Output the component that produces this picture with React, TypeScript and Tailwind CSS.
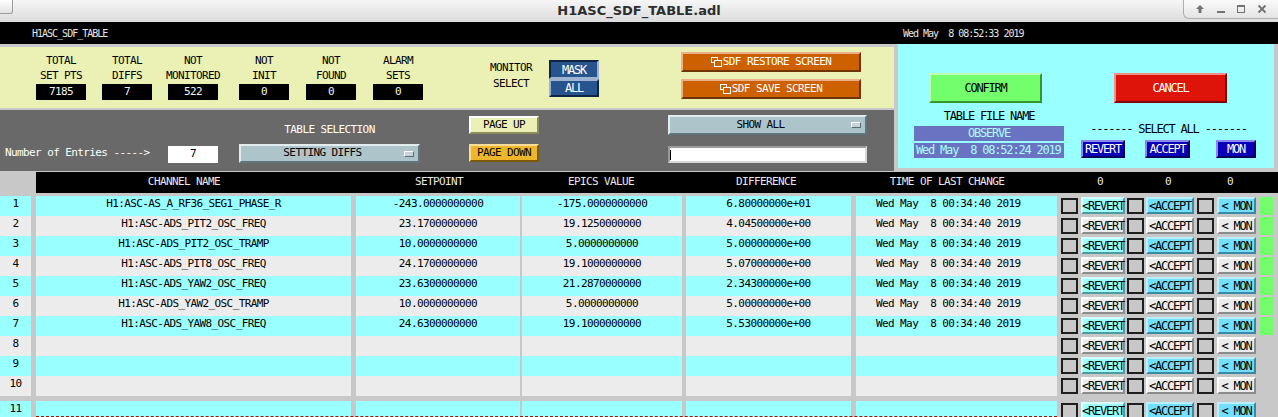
import React from 'react';

type Row = { name: string; set: string; epics: string; diff: string };

const rows: Row[] = [
  { name: 'H1:ASC-AS_A_RF36_SEG1_PHASE_R', set: '-243.0000000000', epics: '-175.0000000000', diff: '6.80000000e+01' },
  { name: 'H1:ASC-ADS_PIT2_OSC_FREQ', set: '23.1700000000', epics: '19.1250000000', diff: '4.04500000e+00' },
  { name: 'H1:ASC-ADS_PIT2_OSC_TRAMP', set: '10.0000000000', epics: '5.0000000000', diff: '5.00000000e+00' },
  { name: 'H1:ASC-ADS_PIT8_OSC_FREQ', set: '24.1700000000', epics: '19.1000000000', diff: '5.07000000e+00' },
  { name: 'H1:ASC-ADS_YAW2_OSC_FREQ', set: '23.6300000000', epics: '21.2870000000', diff: '2.34300000e+00' },
  { name: 'H1:ASC-ADS_YAW2_OSC_TRAMP', set: '10.0000000000', epics: '5.0000000000', diff: '5.00000000e+00' },
  { name: 'H1:ASC-ADS_YAW8_OSC_FREQ', set: '24.6300000000', epics: '19.1000000000', diff: '5.53000000e+00' },
];

const counters = [
  { top: 'TOTAL', bottom: 'SET PTS', value: '7185', ml: 'ml-[36px]' },
  { top: 'TOTAL', bottom: 'DIFFS', value: '7', ml: 'ml-[16px]' },
  { top: 'NOT', bottom: 'MONITORED', value: '522', ml: 'ml-[16px]' },
  { top: 'NOT', bottom: 'INIT', value: '0', ml: 'ml-[21px]' },
  { top: 'NOT', bottom: 'FOUND', value: '0', ml: 'ml-[17px]' },
  { top: 'ALARM', bottom: 'SETS', value: '0', ml: 'ml-[17px]' },
];

// motif-ish bevels
const bevelGray = 'border-2 border-t-white border-l-white border-b-[#8c8c8c] border-r-[#8c8c8c] bg-[#ececec]';
const bevelCyan = 'border-2 border-t-[#d6ffff] border-l-[#d6ffff] border-b-[#4f9a9a] border-r-[#4f9a9a] bg-[#99ffff]';
const bevelBlue = 'border-2 border-t-[#b9efff] border-l-[#b9efff] border-b-[#3a89a3] border-r-[#3a89a3] bg-[#73dfff]';
const bevelNavy = 'border-2 border-t-[#8c86f0] border-l-[#8c86f0] border-b-[#05005c] border-r-[#05005c] bg-[#0a00b8]';
const bevelOrange = 'border-2 border-t-[#eab088] border-l-[#eab088] border-b-[#6e3300] border-r-[#6e3300] bg-[#cd6100]';
const bevelMenu = 'border-2 border-t-[#e2ecef] border-l-[#e2ecef] border-b-[#5f767d] border-r-[#5f767d] bg-[#aec4cb]';

const small = 'text-[12px] tracking-[-1.2px]';

function TitleBar() {
  return (
    <div className="flex h-[22px] bg-gradient-to-b from-[#f6f6f6] to-[#dcdcdc]">
      <div className="flex-1">
        <div className="h-[14px] w-[13px] rounded-br-[3px] border-r border-b border-[#9c9c9c] bg-gradient-to-b from-white to-[#e2e2e2]" />
      </div>
      <span className="self-center font-['DejaVu_Sans',sans-serif] text-[13px] font-bold tracking-normal text-[#2e2e2e]">
        H1ASC_SDF_TABLE.adl
      </span>
      <div className="flex flex-1 justify-end">
        <div className="flex h-[19px] w-[95px] items-center justify-around rounded-bl-[6px] border-l border-b border-[#adadad] bg-gradient-to-b from-[#fafafa] to-[#e4e4e4] px-[6px]">
          <svg width="10" height="10" viewBox="0 0 10 10">
            <path d="M5 1 L9 5 H6.5 V9 H3.5 V5 H1 Z" fill="#727272" />
          </svg>
          <svg width="10" height="10" viewBox="0 0 10 10">
            <rect x="1" y="7" width="8" height="2" fill="#727272" />
          </svg>
          <svg width="10" height="10" viewBox="0 0 10 10">
            <rect x="1.5" y="1.5" width="7" height="7" fill="none" stroke="#727272" />
            <rect x="1" y="1" width="8" height="2" fill="#727272" />
          </svg>
          <svg width="10" height="10" viewBox="0 0 10 10">
            <path d="M1.5 1.5 L8.5 8.5 M8.5 1.5 L1.5 8.5" stroke="#727272" strokeWidth="1.8" />
          </svg>
        </div>
      </div>
    </div>
  );
}

function RelatedIcon() {
  return (
    <svg width="11" height="10" viewBox="0 0 11 10" className="mr-[1px]">
      <rect x="0.5" y="0.5" width="6" height="5" fill="none" stroke="#ffffff" />
      <rect x="3.5" y="3.5" width="7" height="6" fill="#cd6100" stroke="#ffffff" />
    </svg>
  );
}

function Menu({ label, w }: { label: string; w: string }) {
  return (
    <div className={`flex items-center text-black ${bevelMenu} ${w}`}>
      <span className="flex-1 text-center">{label}</span>
      <span className="mr-[4px] h-[6px] w-[10px] border border-t-white border-l-white border-b-[#5a6c72] border-r-[#5a6c72] bg-[#c4d4d9]" />
    </div>
  );
}

function StatusPanel() {
  return (
    <div className="mt-[3px] flex h-[61px] items-start bg-[#ebf1b5] text-black">
      {counters.map((c) => (
        <div key={c.bottom} className={`flex w-[50px] flex-col items-center pt-[6px] ${c.ml}`}>
          <span className="whitespace-nowrap leading-[15px]">{c.top}</span>
          <span className="whitespace-nowrap leading-[15px]">{c.bottom}</span>
          <div className="mt-[1px] h-[16px] w-[50px] bg-black text-center leading-[16px] text-[#f2f2f2]">{c.value}</div>
        </div>
      ))}

      <div className="ml-[67px] flex w-[42px] flex-col items-center pt-[13px]">
        <span className="leading-[16px]">MONITOR</span>
        <span className="leading-[16px]">SELECT</span>
      </div>

      <div className={`ml-[17px] mt-[13px] flex w-[50px] flex-col text-white ${small}`}>
        <div className="flex h-[19px] items-center justify-center border-2 border-t-[#0f2444] border-l-[#0f2444] border-b-[#9cb4d2] border-r-[#9cb4d2] bg-[#27548d]">
          MASK
        </div>
        <div className="flex h-[18px] items-center justify-center border-2 border-t-[#9cb4d2] border-l-[#9cb4d2] border-b-[#0f2444] border-r-[#0f2444] bg-[#27548d]">
          ALL
        </div>
      </div>

      <div className="ml-[82px] mt-[5px] flex w-[180px] flex-col text-white">
        <div className={`flex h-[20px] items-center justify-center ${bevelOrange}`}>
          <RelatedIcon />
          SDF RESTORE SCREEN
        </div>
        <div className={`mt-[7px] flex h-[20px] items-center justify-center ${bevelOrange}`}>
          <RelatedIcon />
          SDF SAVE SCREEN
        </div>
      </div>
    </div>
  );
}

function SelectionPanel() {
  return (
    <div className="mt-[2px] flex h-[61px] items-start bg-[#696969] text-white">
      <span className="ml-[5px] mt-[36px] w-[163px] whitespace-pre leading-[14px]">Number of Entries -----&gt;</span>
      <div className="mt-[36px] h-[17px] w-[50px] bg-white text-center leading-[15px] text-black">7</div>

      <div className="ml-[21px] flex w-[181px] flex-col">
        <span className="mt-[13px] text-center leading-[14px]">TABLE SELECTION</span>
        <div className="mt-[7px]">
          <Menu label="SETTING DIFFS" w="h-[19px] w-[181px]" />
        </div>
      </div>

      <div className="ml-[49px] flex w-[70px] flex-col text-black">
        <div className="mt-[6px] flex h-[18px] items-center justify-center border-2 border-t-white border-l-white border-b-[#8a8c5c] border-r-[#8a8c5c] bg-[#ebf1b5]">
          PAGE UP
        </div>
        <div className="mt-[10px] flex h-[18px] items-center justify-center border-2 border-t-[#f8dc98] border-l-[#f8dc98] border-b-[#7c5a0e] border-r-[#7c5a0e] bg-[#eeb62b]">
          PAGE DOWN
        </div>
      </div>

      <div className="ml-[129px] flex w-[199px] flex-col">
        <div className="mt-[5px]">
          <Menu label="SHOW ALL" w="h-[20px] w-[199px]" />
        </div>
        <div className="mt-[11px] flex h-[17px] items-center border-2 border-t-[#9a9a9a] border-l-[#9a9a9a] border-b-[#d8d8d8] border-r-[#d8d8d8] bg-white">
          <span className="h-[10px] w-[1px] bg-black" />
        </div>
      </div>
    </div>
  );
}

function ConfirmPanel() {
  return (
    <div className={`ml-[4px] h-[124px] w-[376px] bg-[#99ffff] text-black ${small}`}>
      <div className="flex pt-[29px]">
        <div className="ml-[31px] flex h-[30px] w-[113px] items-center justify-center border-2 border-t-[#bfffb8] border-l-[#bfffb8] border-b-[#38962c] border-r-[#38962c] bg-[#73ff6b]">
          CONFIRM
        </div>
        <div className="ml-[72px] flex h-[30px] w-[113px] items-center justify-center border-2 border-t-[#f29088] border-l-[#f29088] border-b-[#7a0602] border-r-[#7a0602] bg-[#de1309] text-white">
          CANCEL
        </div>
      </div>
      <div className="flex">
        <div className="ml-[16px] flex w-[150px] flex-col">
          <span className="mt-[6px] text-center leading-[14px]">TABLE FILE NAME</span>
          <div className="mt-[3px] h-[15px] bg-[#6a73c1] text-center leading-[15px] text-[#a8ffff]">OBSERVE</div>
          <div className="mt-[2px] h-[15px] whitespace-pre bg-[#6a73c1] pl-[2px] leading-[15px] text-[#a8ffff]">
            Wed May  8 08:52:24 2019
          </div>
        </div>
        <div className="ml-[17px] flex w-[175px] flex-col">
          <span className="mt-[19px] whitespace-pre text-center leading-[14px]">------- SELECT ALL -------</span>
          <div className="mt-[4px] flex text-white">
            <div className={`flex h-[18px] w-[44px] items-center justify-center ${bevelNavy}`}>REVERT</div>
            <div className={`ml-[20px] flex h-[18px] w-[45px] items-center justify-center ${bevelNavy}`}>ACCEPT</div>
            <div className={`ml-[26px] flex h-[18px] w-[40px] items-center justify-center ${bevelNavy}`}>MON</div>
          </div>
        </div>
      </div>
    </div>
  );
}

function TableHeader() {
  return (
    <div className="ml-[36px] mt-[1px] flex h-[21px] items-center bg-black text-[#e8e8e8]">
      <span className="w-[296px] text-center">CHANNEL NAME</span>
      <span className="w-[214px] text-center">SETPOINT</span>
      <span className="w-[110px] text-center">EPICS VALUE</span>
      <span className="w-[220px] text-center">DIFFERENCE</span>
      <span className="w-[142px] text-center">TIME OF LAST CHANGE</span>
      <span className="ml-[62px] w-[40px] text-center">0</span>
      <span className="ml-[28px] w-[40px] text-center">0</span>
      <span className="ml-[22px] w-[40px] text-center">0</span>
    </div>
  );
}

function Box() {
  return <div className="mt-[2px] h-[16px] w-[17px] border-2 border-[#1e1e1e] bg-[#c8c8c8]" />;
}

function DataRow({ n, row, className = '' }: { n: number; row?: Row; className?: string }) {
  const odd = n % 2 === 1;
  const cell = odd ? 'bg-[#99ffff]' : 'bg-[#ececec]';
  const revert = odd ? bevelCyan : bevelGray;
  const other = odd ? bevelBlue : bevelGray;
  return (
    <div className={`relative flex h-[20px] text-black ${className}`}>
      <div className={`w-[31px] text-center leading-[15px] ${cell}`}>{n}</div>
      <div className={`ml-[5px] w-[315px] text-center leading-[15px] ${cell}`}>{row?.name}</div>
      <div className={`ml-[5px] w-[164px] text-center leading-[15px] ${cell}`}>{row?.set}</div>
      <div className={`ml-[2px] w-[160px] text-center leading-[15px] ${cell}`}>{row?.epics}</div>
      <div className={`ml-[4px] w-[165px] text-center leading-[15px] ${cell}`}>{row?.diff}</div>
      <div className={`ml-[5px] w-[201px] whitespace-pre pl-[20px] leading-[15px] ${cell}`}>
        {row ? 'Wed May  8 00:34:40 2019' : ''}
      </div>

      <div className={`ml-[4px] flex ${small}`}>
        <Box />
        <div className={`ml-[3px] mt-[1px] flex h-[17px] w-[44px] items-center justify-center whitespace-nowrap ${revert}`}>&lt;REVERT</div>
        <div className="ml-[2px]"><Box /></div>
        <div className={`ml-[2px] mt-[1px] flex h-[17px] w-[48px] items-center justify-center whitespace-nowrap ${other}`}>&lt;ACCEPT</div>
        <div className="ml-[3px]"><Box /></div>
        <div className={`ml-[3px] mt-[1px] flex h-[17px] w-[39px] items-center justify-center whitespace-pre ${other}`}>&lt; MON</div>
        {row && <div className="ml-[4px] mt-[1px] h-[18px] w-[13px] bg-[#73ff6b]" />}
      </div>
    </div>
  );
}

export default function App() {
  return (
    <div className="h-[417px] w-[1278px] overflow-hidden bg-[#c8c8c8] font-['DejaVu_Sans_Mono',monospace] text-[11px] tracking-[-0.6px]">
      <TitleBar />

      <div className="flex h-[22px] items-center bg-black text-[10px] tracking-[-1px] text-[#e6e6e6]">
        <span className="w-[903px] pl-[32px]">H1ASC_SDF_TABLE</span>
        <span className="whitespace-pre">Wed May  8 08:52:33 2019</span>
      </div>

      <div className="flex">
        <div className="flex w-[894px] flex-col">
          <StatusPanel />
          <SelectionPanel />
        </div>
        <ConfirmPanel />
      </div>

      <TableHeader />

      <div className="mt-[3px] flex flex-col">
        {Array.from({ length: 10 }, (_, i) => (
          <DataRow key={i} n={i + 1} row={rows[i]} />
        ))}
        <div className="relative mt-[5px]">
          <DataRow n={11} />
          {/* dashed outline of the next block */}
          <div className="pointer-events-none absolute left-[36px] top-[15px] w-[1021px] border-t border-dashed border-[#a01207]" />
        </div>
      </div>
    </div>
  );
}
